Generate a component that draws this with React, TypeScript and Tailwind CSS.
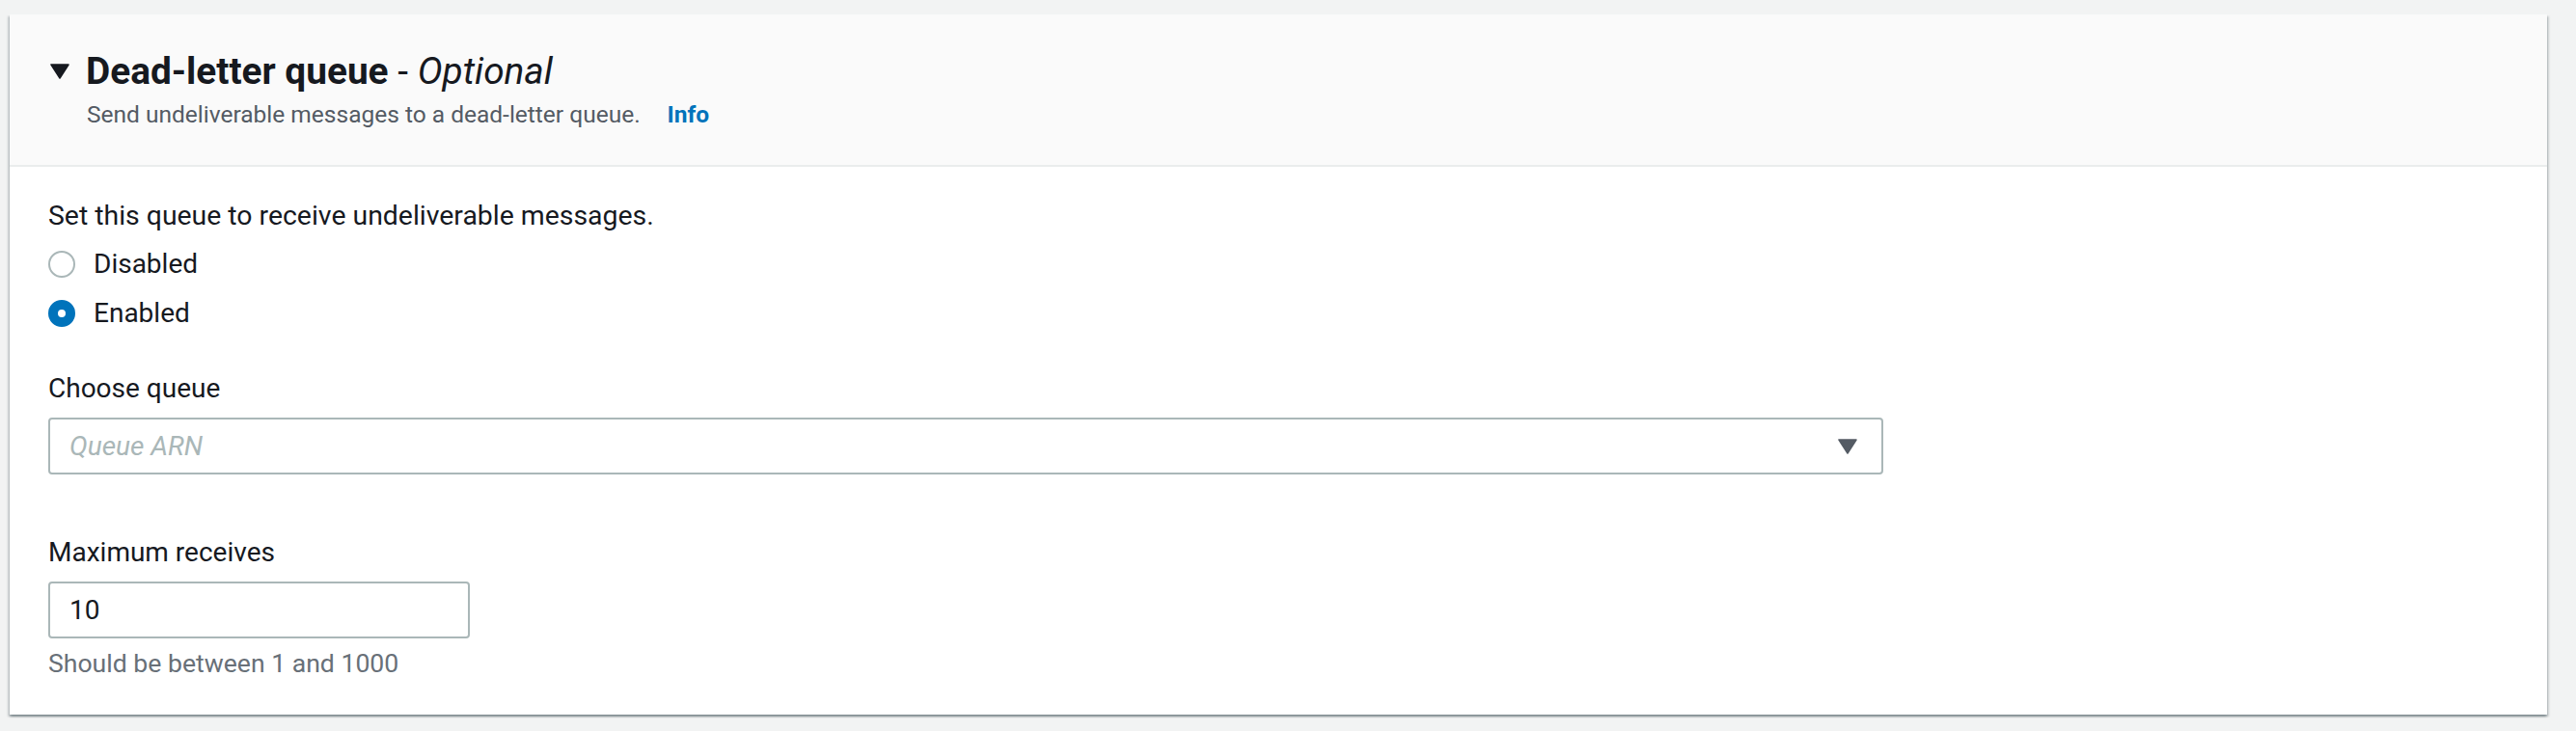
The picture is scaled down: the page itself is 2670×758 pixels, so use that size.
import React from "react";

function DownTriangle({ className }: { className?: string }) {
  return (
    <svg width="20" height="16" viewBox="0 0 20 16" className={className}>
      <path d="M1 1 L19 1 L10 15 Z" fill="currentColor" stroke="currentColor" strokeWidth="1.5" strokeLinejoin="round" />
    </svg>
  );
}

export default function App() {
  return (
    <div className="min-h-[758px] bg-[#f2f3f3] pt-[15px] pb-[15px] pl-[10px] pr-[30px] font-[Roboto,sans-serif]">
      <div className="bg-white shadow-[0_2px_2px_0_rgba(0,28,36,0.3),2px_2px_2px_0_rgba(0,28,36,0.15),-2px_2px_2px_0_rgba(0,28,36,0.15)]">
        {/* Header */}
        <div className="bg-[#fafafa] border-b-2 border-[#eaeded] pl-[42px] pt-[37px] pb-[36px]">
          <div className="flex items-center">
            <DownTriangle className="text-[#16191f] mr-[17px] shrink-0" />
            <h2 className="text-[38.8px] leading-[44px] font-bold text-[#16191f]">
              Dead-letter queue <span className="font-normal">-</span>{" "}
              <span className="italic font-normal">Optional</span>
            </h2>
          </div>
          <div className="mt-[7px] pl-[38px] flex items-baseline text-[24.5px] leading-[32px]">
            <span className="text-[#545b64]">Send undeliverable messages to a dead-letter queue.</span>
            <span className="ml-[28px] font-bold text-[#0073bb]">Info</span>
          </div>
        </div>

        {/* Body */}
        <div className="pt-[31px] px-[40px] pb-[37px]">
          <p className="text-[28.4px] leading-[40px] text-[#16191f]">
            Set this queue to receive undeliverable messages.
          </p>
          <div className="mt-[10px] flex flex-col gap-[11px]">
            <label className="flex items-center h-[40px]">
              <span className="w-[28px] h-[28px] rounded-full border-2 border-[#aab7b8] bg-white shrink-0" />
              <span className="ml-[19px] text-[28px] leading-[40px] text-[#16191f]">Disabled</span>
            </label>
            <label className="flex items-center h-[40px]">
              <span className="w-[28px] h-[28px] rounded-full border-[10px] border-[#0073bb] bg-white shrink-0" />
              <span className="ml-[19px] text-[28px] leading-[40px] text-[#16191f]">Enabled</span>
            </label>
          </div>

          <div className="mt-[38px] text-[28px] leading-[40px] text-[#16191f]">Choose queue</div>
          <div className="mt-[10px] w-[1902px] h-[59px] border-2 border-[#aab7b8] rounded-[4px] bg-white flex items-center justify-between pl-[20px] pr-[25px]">
            <span className="italic text-[28px] leading-[40px] text-[#aab7b8]">Queue ARN</span>
            <DownTriangle className="text-[#545b64] shrink-0" />
          </div>

          <div className="mt-[61px] text-[28px] leading-[40px] text-[#16191f]">Maximum receives</div>
          <div className="mt-[10px] w-[437px] h-[59px] border-2 border-[#aab7b8] rounded-[4px] bg-white flex items-center pl-[20px]">
            <span className="text-[28px] leading-[40px] text-[#16191f]">10</span>
          </div>
          <div className="mt-[10px] text-[26.6px] leading-[32px] text-[#687078]">Should be between 1 and 1000</div>
        </div>
      </div>
    </div>
  );
}
